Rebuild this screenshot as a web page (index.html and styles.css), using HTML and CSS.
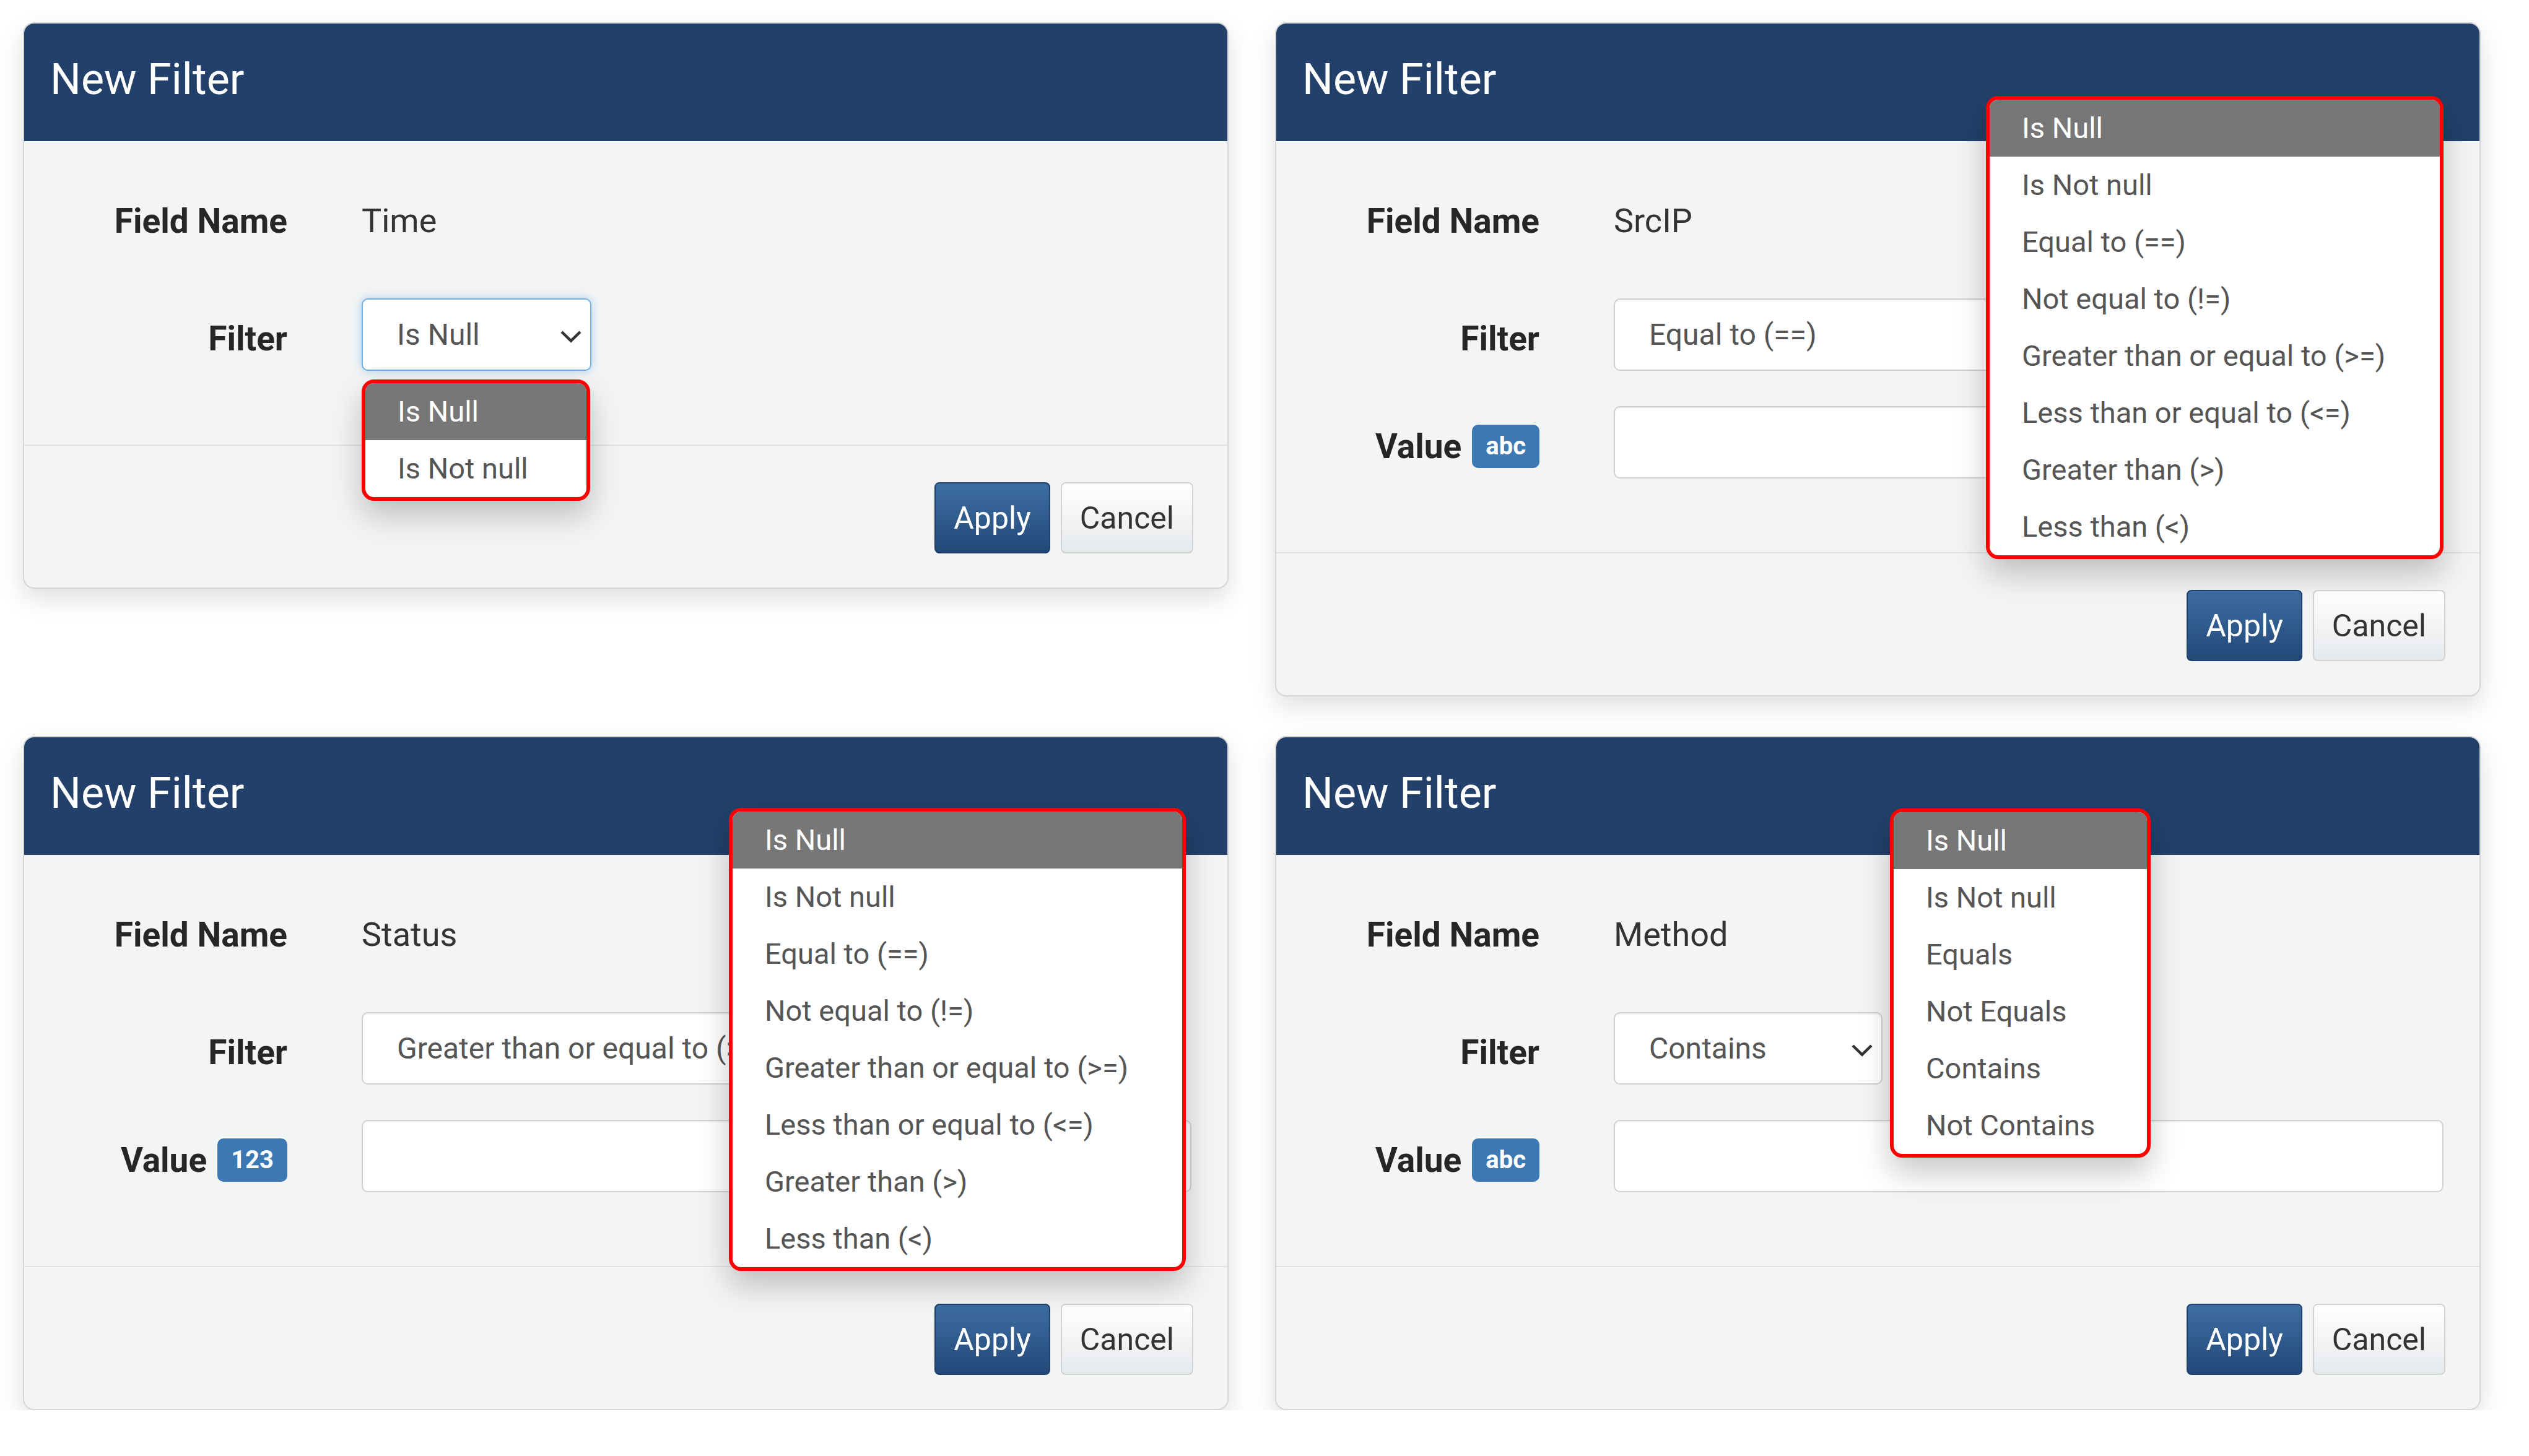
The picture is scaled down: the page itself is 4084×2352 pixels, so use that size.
FILE: index.html
```html
<!DOCTYPE html>
<html>
<head>
  <meta charset="UTF-8">
  <title>New Filter</title>
  <link rel="stylesheet" href="styles.css">
</head>
<body>
  <div class="grid">

    <!-- Time: only null checks -->
    <div class="panel">
      <div class="panel-header">New Filter</div>
      <div class="panel-body">
        <div class="form-row static">
          <label class="form-label">Field Name</label>
          <div class="form-value">Time</div>
        </div>
        <div class="form-row">
          <label class="form-label">Filter</label>
          <div>
            <div class="select select-sm focused">
              <span>Is Null</span>
              <svg width="36" height="22" viewBox="0 0 36 22"><polyline points="3,4 18,18.5 33,4" fill="none" stroke="#333" stroke-width="4.5"/></svg>
            </div>
          </div>
        </div>
      </div>
      <div class="panel-footer">
        <button class="btn btn-primary">Apply</button>
        <button class="btn btn-default">Cancel</button>
      </div>
      <ul class="dropdown dropdown-time">
        <li class="active">Is Null</li>
        <li>Is Not null</li>
      </ul>
    </div>

    <!-- SrcIP -->
    <div class="panel">
      <div class="panel-header">New Filter</div>
      <div class="panel-body">
        <div class="form-row static">
          <label class="form-label">Field Name</label>
          <div class="form-value">SrcIP</div>
        </div>
        <div class="form-row">
          <label class="form-label">Filter</label>
          <div>
            <div class="select select-lg">
              <span>Equal to (==)</span>
              <svg width="36" height="22" viewBox="0 0 36 22"><polyline points="3,4 18,18.5 33,4" fill="none" stroke="#333" stroke-width="4.5"/></svg>
            </div>
          </div>
        </div>
        <div class="form-row">
          <label class="form-label">Value <span class="badge">abc</span></label>
          <input class="value-input" type="text">
        </div>
      </div>
      <div class="panel-footer">
        <button class="btn btn-primary">Apply</button>
        <button class="btn btn-default">Cancel</button>
      </div>
      <ul class="dropdown dropdown-srcip">
        <li class="active">Is Null</li>
        <li>Is Not null</li>
        <li>Equal to (==)</li>
        <li>Not equal to (!=)</li>
        <li>Greater than or equal to (&gt;=)</li>
        <li>Less than or equal to (&lt;=)</li>
        <li>Greater than (&gt;)</li>
        <li>Less than (&lt;)</li>
      </ul>
    </div>

    <!-- Status -->
    <div class="panel">
      <div class="panel-header">New Filter</div>
      <div class="panel-body">
        <div class="form-row static">
          <label class="form-label">Field Name</label>
          <div class="form-value">Status</div>
        </div>
        <div class="form-row">
          <label class="form-label">Filter</label>
          <div>
            <div class="select select-lg">
              <span>Greater than or equal to (&gt;=)</span>
              <svg width="36" height="22" viewBox="0 0 36 22"><polyline points="3,4 18,18.5 33,4" fill="none" stroke="#333" stroke-width="4.5"/></svg>
            </div>
          </div>
        </div>
        <div class="form-row">
          <label class="form-label">Value <span class="badge">123</span></label>
          <input class="value-input" type="text">
        </div>
      </div>
      <div class="panel-footer">
        <button class="btn btn-primary">Apply</button>
        <button class="btn btn-default">Cancel</button>
      </div>
      <ul class="dropdown dropdown-status">
        <li class="active">Is Null</li>
        <li>Is Not null</li>
        <li>Equal to (==)</li>
        <li>Not equal to (!=)</li>
        <li>Greater than or equal to (&gt;=)</li>
        <li>Less than or equal to (&lt;=)</li>
        <li>Greater than (&gt;)</li>
        <li>Less than (&lt;)</li>
      </ul>
    </div>

    <!-- Method -->
    <div class="panel">
      <div class="panel-header">New Filter</div>
      <div class="panel-body">
        <div class="form-row static">
          <label class="form-label">Field Name</label>
          <div class="form-value">Method</div>
        </div>
        <div class="form-row">
          <label class="form-label">Filter</label>
          <div>
            <div class="select select-md">
              <span>Contains</span>
              <svg width="36" height="22" viewBox="0 0 36 22"><polyline points="3,4 18,18.5 33,4" fill="none" stroke="#333" stroke-width="4.5"/></svg>
            </div>
          </div>
        </div>
        <div class="form-row">
          <label class="form-label">Value <span class="badge">abc</span></label>
          <input class="value-input" type="text">
        </div>
      </div>
      <div class="panel-footer">
        <button class="btn btn-primary">Apply</button>
        <button class="btn btn-default">Cancel</button>
      </div>
      <ul class="dropdown dropdown-method">
        <li class="active">Is Null</li>
        <li>Is Not null</li>
        <li>Equals</li>
        <li>Not Equals</li>
        <li>Contains</li>
        <li>Not Contains</li>
      </ul>
    </div>

  </div>
</body>
</html>
```

FILE: styles.css
```css
body {
  margin: 0;
  background-color: #ffffff;
  font-family: Roboto, 'Liberation Sans', sans-serif;
  color: #333;
}

.grid {
  display: grid;
  grid-template-columns: 1947px 1947px;
  column-gap: 75px;
  row-gap: 64px;
  align-items: start;
  padding: 36px 0 0 37px;
}

.panel {
  position: relative;
  box-sizing: border-box;
  background-color: #f3f4f4;
  border: 2px solid #d4d6d8;
  border-radius: 18px;
  box-shadow: 0 16px 40px rgba(0, 0, 0, 0.13);
}

.panel-header {
  box-sizing: border-box;
  height: 190px;
  padding: 55px 42px 0;
  background-color: #22406a;
  border-radius: 16px 16px 0 0;
  color: #fff;
  font-size: 70px;
  line-height: 1;
}

.panel-body {
  display: flex;
  flex-direction: column;
  gap: 57px;
  padding: 70px 58px 119px;
}

.form-row {
  display: grid;
  grid-template-columns: 367px 1fr;
  column-gap: 120px;
  align-items: center;
  height: 117px;
}

.form-row.static {
  margin-bottom: 10px;
}

.form-label {
  display: flex;
  justify-content: flex-end;
  align-items: center;
  gap: 17px;
  padding-top: 12px;
  font-size: 55px;
  font-weight: bold;
  color: #262626;
}

.form-row.static .form-label {
  padding-top: 0;
}

.form-value {
  font-size: 54px;
  color: #333;
}

.badge {
  height: 70px;
  padding: 0 22px;
  line-height: 70px;
  background-color: #3b78b4;
  border-radius: 10px;
  color: #fff;
  font-size: 40px;
  font-weight: bold;
}

/* select look-alike */
.select {
  display: flex;
  align-items: center;
  justify-content: space-between;
  box-sizing: border-box;
  height: 117px;
  padding: 0 13px 0 55px;
  background-color: #fff;
  border: 2px solid #cfd2d4;
  border-radius: 10px;
  box-shadow: inset 0 2px 2px rgba(0, 0, 0, 0.05);
  font-size: 48px;
  color: #555;
}

.select svg {
  margin-top: 4px;
}

.select.focused {
  border-color: #74aee3;
  box-shadow: 0 0 14px rgba(102, 175, 233, 0.55);
}

.select-sm {
  width: 371px;
}

.select-md {
  width: 434px;
}

.select-lg {
  width: 780px;
}

.value-input {
  box-sizing: border-box;
  width: 100%;
  height: 117px;
  background-color: #fff;
  border: 2px solid #cfd2d4;
  border-radius: 10px;
  box-shadow: inset 0 2px 2px rgba(0, 0, 0, 0.05);
}

.panel-footer {
  display: flex;
  justify-content: flex-end;
  gap: 17px;
  padding: 59px 55px 55px;
  border-top: 2px solid #e1e3e4;
}

.btn {
  height: 115px;
  padding: 0 29px;
  border-radius: 8px;
  font-family: Roboto, 'Liberation Sans', sans-serif;
  font-size: 50px;
  cursor: pointer;
}

.btn-primary {
  background: linear-gradient(#3e6ea4, #224877);
  border: 2px solid #1d416c;
  color: #fff;
}

.btn-default {
  background: linear-gradient(#ffffff, #e6e9ec);
  border: 2px solid #d0d2d4;
  color: #333;
}

/* open option lists, drawn over the form */
.dropdown {
  position: absolute;
  margin: 0;
  padding: 0;
  list-style: none;
  background-color: #fff;
  border: 6px solid #ff0000;
  border-radius: 20px;
  overflow: hidden;
  box-shadow: 0 24px 50px rgba(0, 0, 0, 0.22);
}

.dropdown li {
  height: 92px;
  padding-left: 52px;
  line-height: 92px;
  font-size: 47px;
  color: #555;
  white-space: nowrap;
}

.dropdown li.active {
  background-color: #777;
  color: #fff;
}

.dropdown-time {
  left: 545px;
  top: 575px;
  width: 357px;
}

.dropdown-srcip {
  left: 1146px;
  top: 117px;
  width: 727px;
}

.dropdown-status {
  left: 1138px;
  top: 114px;
  width: 726px;
}

.dropdown-method {
  left: 991px;
  top: 115px;
  width: 409px;
}
```
